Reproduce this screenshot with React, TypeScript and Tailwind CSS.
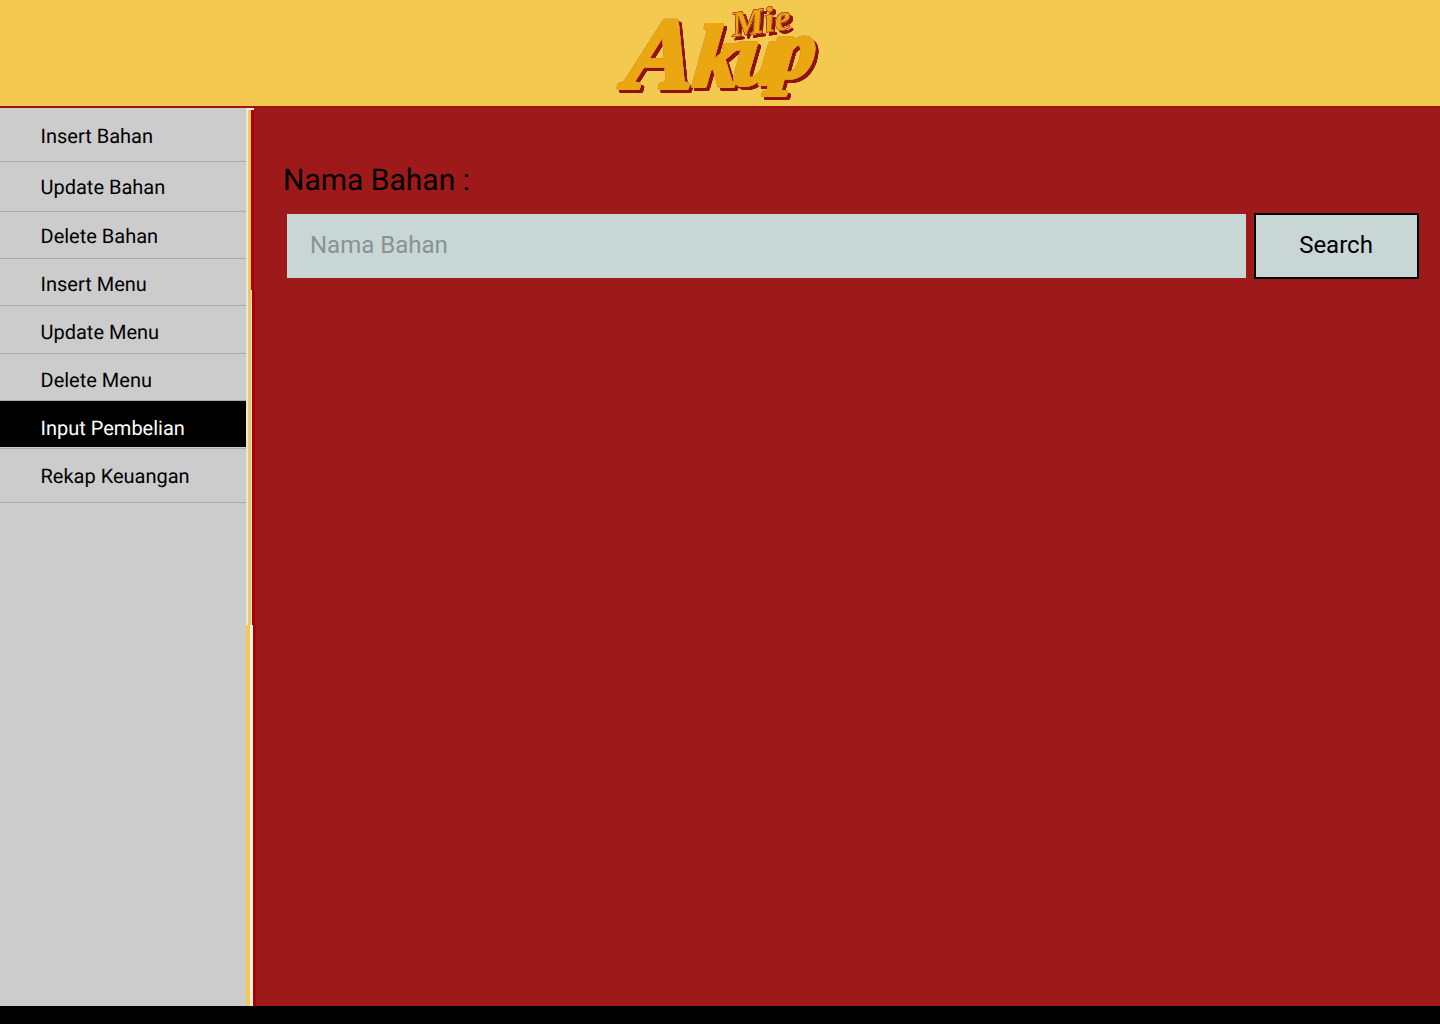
const menuItems = [
  { label: 'Insert Bahan', height: 'h-[54px]', text: 'pt-[3px]' },
  { label: 'Update Bahan', height: 'h-[50px]', text: 'pt-[1px]' },
  { label: 'Delete Bahan', height: 'h-[47px]', text: 'pt-[1px]' },
  { label: 'Insert Menu', height: 'h-[47px]', text: 'pt-[4px]' },
  { label: 'Update Menu', height: 'h-[48px]', text: 'pt-[5px]' },
  { label: 'Delete Menu', height: 'h-[47px]', text: 'pt-[6px]' },
  { label: 'Input Pembelian', height: 'h-[48px] pb-[1px]', text: 'pt-[8px] bg-black text-white' },
  { label: 'Rekap Keuangan', height: 'h-[54px]', text: 'pt-[1px]' },
];

function Logo() {
  return (
    <svg
      width="200"
      height="106"
      viewBox="0 0 200 106"
      className="block overflow-visible [filter:drop-shadow(0_0_0.6px_#a5421a)_drop-shadow(0_0_0.6px_#fbeeb5)_drop-shadow(3px_3px_0_#8f1113)]"
    >
      <g fontFamily="'Liberation Serif', serif" fontWeight="700" fontStyle="italic" strokeLinejoin="round" paintOrder="stroke">
        <text fill="#eba712" stroke="#eba712" strokeWidth="4" transform="skewX(-6) translate(9 0)">
          <tspan x="4" y="88" fontSize="102">A</tspan>
          <tspan x="72" y="86" fontSize="88">k</tspan>
          <tspan x="111" y="84" fontSize="88">u</tspan>
          <tspan x="150" y="77" fontSize="84">p</tspan>
        </text>
        <text x="112" y="33" fontSize="36" fill="#eba712" stroke="#8f1113" strokeWidth="1" transform="rotate(-8 140 30)" textLength="60" lengthAdjust="spacingAndGlyphs">
          Mie
        </text>
      </g>
    </svg>
  );
}

// divider between sidebar and content drifts a little to the right going down
function Divider() {
  return (
    <div className="flex w-[10px] shrink-0 flex-col bg-[#9e1919]">
      <div className="h-[2px] w-[8px] bg-[#eeeeee]" />
      <div className="flex h-[180px]">
        <div className="w-[2px] bg-[#e6e6e6]" />
        <div className="w-[3px] bg-[#f4c950]" />
        <div className="w-[3px] bg-[#ad0000]" />
      </div>
      <div className="flex h-[335px]">
        <div className="w-[2px] bg-[#e6e6e6]" />
        <div className="w-[3px] bg-[#f4c950]" />
        <div className="w-[1px] bg-[#eeeeee]" />
        <div className="w-[3px] bg-[#ad0000]" />
      </div>
      <div className="flex flex-1">
        <div className="w-[4px] bg-[#f4c950]" />
        <div className="w-[3px] bg-[#eeeeee]" />
        <div className="w-[3px] bg-[#ad0000]" />
      </div>
    </div>
  );
}

export default function App() {
  return (
    <div className="flex h-[1024px] w-[1440px] flex-col bg-black font-['Roboto',sans-serif] text-black [text-rendering:geometricPrecision]">
      <header className="flex h-[108px] shrink-0 justify-center border-b-2 border-[#a51212] bg-[#f4c950]">
        <Logo />
      </header>

      <div className="flex h-[898px] shrink-0">
        <aside className="flex w-[256px] shrink-0 bg-[#cccccc]">
          <nav className="flex w-[246px] shrink-0 flex-col">
            {menuItems.map((item) => (
              <a key={item.label} className={`block ${item.height} border-b border-[#aaaaaa] text-[20px]`}>
                <span className={`flex h-full items-center pl-[40.5px] ${item.text}`}>{item.label}</span>
              </a>
            ))}
          </nav>
          <Divider />
        </aside>

        <main className="flex-1 bg-[#9e1919] pt-[53px]">
          <label className="block pl-[27px] text-[30px] leading-[40px]">Nama Bahan :</label>
          <div className="mt-[12px] flex items-center pl-[31px]">
            <input
              placeholder="Nama Bahan"
              className="h-[64px] w-[959px] bg-[#c9d6d6] px-[23px] pb-[2px] text-[24px] outline-none placeholder:text-[#869393]"
            />
            <button className="ml-[8px] h-[66px] w-[165px] border-[2px] border-black bg-[#c9d6d6] pr-[1px] pb-[2px] text-[24px]">
              Search
            </button>
          </div>
        </main>
      </div>
    </div>
  );
}
